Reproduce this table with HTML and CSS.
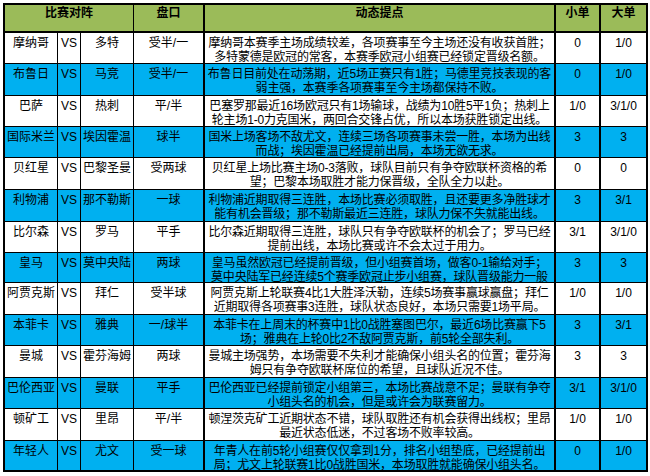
FILE: index.html
```html
<!DOCTYPE html>
<html lang="zh-CN">
<head>
<meta charset="utf-8">
<title>比赛对阵</title>
<link rel="stylesheet" href="styles.css">
</head>
<body>
<div class="sheet">
  <div class="row head">
    <div class="c hd span3">比赛对阵</div>
    <div class="c hd">盘口</div>
    <div class="c hd bl">动态提点</div>
    <div class="c hd bl">小单</div>
    <div class="c hd bl">大单</div>
  </div>
  <div class="row">
    <div class="c">摩纳哥</div><div class="c">VS</div><div class="c">多特</div><div class="c">受半/一</div>
    <div class="c bl txt"><span class="ln">摩纳哥本赛季主场成绩较差，各项赛事至今主场还没有收获首胜；</span><span class="ln">多特蒙德是欧冠的常客，本赛季欧冠小组赛已经锁定晋级名额。</span></div>
    <div class="c bl">0</div><div class="c bl">1/0</div>
  </div>
  <div class="row blue">
    <div class="c">布鲁日</div><div class="c">VS</div><div class="c">马竞</div><div class="c">受半/一</div>
    <div class="c bl txt"><span class="ln">布鲁日目前处在动荡期，近5场正赛只有1胜；马德里竞技表现的客</span><span class="ln">弱主强，本赛季各项赛事至今主场都保持不败。</span></div>
    <div class="c bl">0</div><div class="c bl">1/0</div>
  </div>
  <div class="row">
    <div class="c">巴萨</div><div class="c">VS</div><div class="c">热刺</div><div class="c">平/半</div>
    <div class="c bl txt"><span class="ln">巴塞罗那最近16场欧冠只有1场输球，战绩为10胜5平1负；热刺上</span><span class="ln">轮主场1-0力克国米，两回合交锋占优，所以本场获胜锁定出线。</span></div>
    <div class="c bl">1/0</div><div class="c bl">3/1/0</div>
  </div>
  <div class="row blue">
    <div class="c">国际米兰</div><div class="c">VS</div><div class="c">埃因霍温</div><div class="c">球半</div>
    <div class="c bl txt"><span class="ln">国米上场客场不敌尤文，连续三场各项赛事未尝一胜，本场为出线</span><span class="ln">而战；埃因霍温已经提前出局，本场无欲无求。</span></div>
    <div class="c bl">3</div><div class="c bl">3</div>
  </div>
  <div class="row">
    <div class="c">贝红星</div><div class="c">VS</div><div class="c">巴黎圣曼</div><div class="c">受两球</div>
    <div class="c bl txt"><span class="ln">贝红星上场比赛主场0-3落败，球队目前只有争夺欧联杯资格的希</span><span class="ln">望；巴黎本场取胜才能力保晋级，全队全力以赴。</span></div>
    <div class="c bl">0</div><div class="c bl">0</div>
  </div>
  <div class="row blue">
    <div class="c">利物浦</div><div class="c">VS</div><div class="c">那不勒斯</div><div class="c">一球</div>
    <div class="c bl txt"><span class="ln">利物浦近期取得三连胜，本场比赛必须取胜，且还要更多净胜球才</span><span class="ln">能有机会晋级；那不勒斯最近三连胜，球队力保不失就能出线。</span></div>
    <div class="c bl">3</div><div class="c bl">3/1</div>
  </div>
  <div class="row">
    <div class="c">比尔森</div><div class="c">VS</div><div class="c">罗马</div><div class="c">平手</div>
    <div class="c bl txt"><span class="ln">比尔森近期取得三连胜，球队只有争夺欧联杯的机会了；罗马已经</span><span class="ln">提前出线，本场比赛或许不会太过于用力。</span></div>
    <div class="c bl">3/1</div><div class="c bl">3/1/0</div>
  </div>
  <div class="row blue">
    <div class="c">皇马</div><div class="c">VS</div><div class="c">莫中央陆</div><div class="c">两球</div>
    <div class="c bl txt"><span class="ln">皇马虽然欧冠已经提前晋级，但小组赛首场，做客0-1输给对手；</span><span class="ln">莫中央陆军已经连续5个赛季欧冠止步小组赛，球队晋级能力一般</span></div>
    <div class="c bl">3</div><div class="c bl">3</div>
  </div>
  <div class="row">
    <div class="c">阿贾克斯</div><div class="c">VS</div><div class="c">拜仁</div><div class="c">受半球</div>
    <div class="c bl txt"><span class="ln">阿贾克斯上轮联赛4比1大胜泽沃勒，连续5场赛事赢球赢盘；拜仁</span><span class="ln">近期取得各项赛事3连胜，球队状态良好，本场只需要1场平局。</span></div>
    <div class="c bl">1/0</div><div class="c bl">1/0</div>
  </div>
  <div class="row blue">
    <div class="c">本菲卡</div><div class="c">VS</div><div class="c">雅典</div><div class="c">一/球半</div>
    <div class="c bl txt"><span class="ln">本菲卡在上周末的杯赛中1比0战胜塞图巴尔，最近6场比赛赢下5</span><span class="ln">场；雅典在上轮0比2不敌阿贾克斯，前5轮全部失利。</span></div>
    <div class="c bl">3</div><div class="c bl">3/1</div>
  </div>
  <div class="row">
    <div class="c">曼城</div><div class="c">VS</div><div class="c">霍芬海姆</div><div class="c">两球</div>
    <div class="c bl txt"><span class="ln">曼城主场强势，本场需要不失利才能确保小组头名的位置；霍芬海</span><span class="ln">姆只有争夺欧联杯席位的希望，且球队近况不佳。</span></div>
    <div class="c bl">3</div><div class="c bl">3</div>
  </div>
  <div class="row blue">
    <div class="c">巴伦西亚</div><div class="c">VS</div><div class="c">曼联</div><div class="c">平手</div>
    <div class="c bl txt"><span class="ln">巴伦西亚已经提前锁定小组第三，本场比赛战意不足；曼联有争夺</span><span class="ln">小组头名的机会，但是或许会为联赛留力。</span></div>
    <div class="c bl">3/1</div><div class="c bl">3/1/0</div>
  </div>
  <div class="row">
    <div class="c">顿矿工</div><div class="c">VS</div><div class="c">里昂</div><div class="c">平/半</div>
    <div class="c bl txt"><span class="ln">顿涅茨克矿工近期状态不错，球队取胜还有机会获得出线权；里昂</span><span class="ln">最近状态低迷，不过客场不败率较高。</span></div>
    <div class="c bl">1/0</div><div class="c bl">1/0</div>
  </div>
  <div class="row blue">
    <div class="c">年轻人</div><div class="c">VS</div><div class="c">尤文</div><div class="c">受一球</div>
    <div class="c bl txt"><span class="ln">年青人在前5轮小组赛仅仅拿到1分，排名小组垫底，已经提前出</span><span class="ln">局；尤文上轮联赛1比0战胜国米，本场取胜就能确保小组头名。</span></div>
    <div class="c bl">0</div><div class="c bl">1/0</div>
  </div>
</div>
</body>
</html>
```

FILE: styles.css
```css
html, body {
  margin: 0;
  padding: 0;
  background: #ffffff;
}

body {
  padding: 3px 0 0 3px;
}

.sheet {
  display: grid;
  grid-template-columns: 52px 22px 52px 69px 350px 44px 46px;
  grid-template-rows: 27px 30px 31px 30px 30px 31px 31px 30px 29px 31px 30px 31px 30px 31px 29px;
  gap: 1px;
  padding: 2px;
  background: #000000;
  width: max-content;
}

.row {
  display: contents;
}

.c {
  box-sizing: border-box;
  background: #ffffff;
  color: #000000;
  text-align: center;
  font-family: "Liberation Sans", "Noto Sans CJK SC", sans-serif;
  font-size: 12px;
  line-height: 15px;
  padding-top: 3px;
  white-space: nowrap;
  overflow: visible;
}

.txt {
  display: flex;
  flex-direction: column;
  align-items: center;
  letter-spacing: -0.2px;
}

.ln {
  display: block;
  height: 14px;
  line-height: 14px;
}

.row.blue > .c {
  background: #00b0f0;
}

.hd {
  background: #9bbb59;
  font-weight: bold;
  padding-top: 1px;
  line-height: 14px;
  border-bottom: 1px solid #000000;
}

.span3 {
  grid-column: span 3;
}

.bl {
  border-left: 1px solid #000000;
}
```
